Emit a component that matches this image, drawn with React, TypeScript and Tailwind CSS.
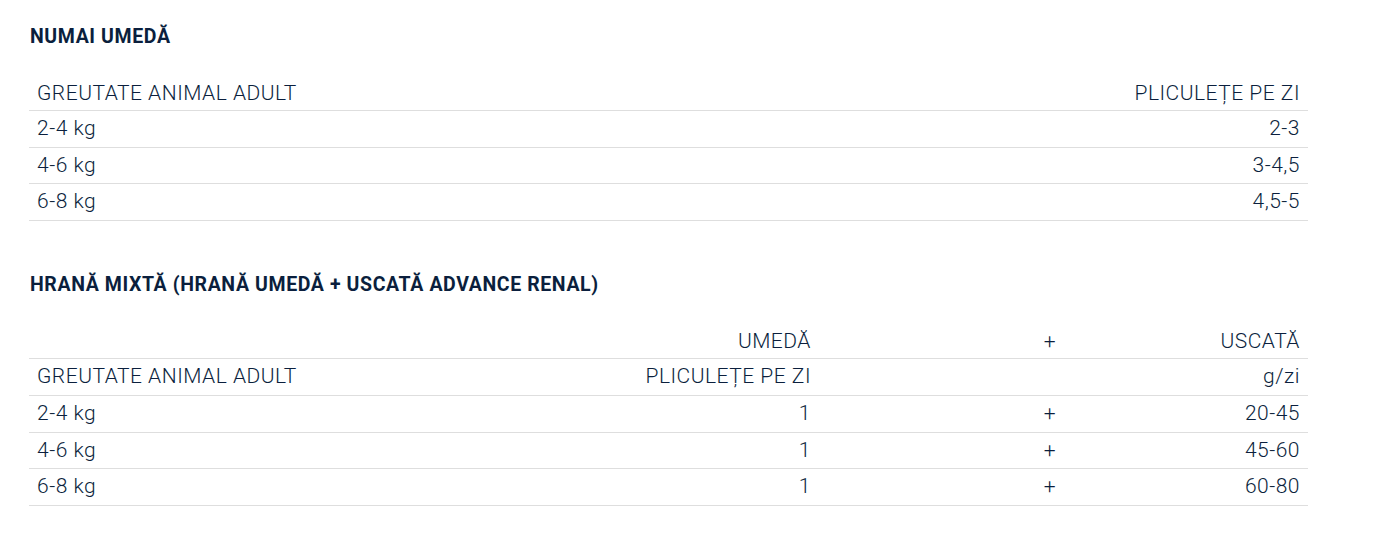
import React from "react";

const navy = "text-[#0b1f3d]";

const wetOnly = [
  ["2-4 kg", "2-3"],
  ["4-6 kg", "3-4,5"],
  ["6-8 kg", "4,5-5"],
];

const mixed = [
  ["2-4 kg", "1", "20-45"],
  ["4-6 kg", "1", "45-60"],
  ["6-8 kg", "1", "60-80"],
];

// header rows sit a little lower than data rows
const head = "px-2 pt-[3px] pb-[5px] leading-[24px] font-light tracking-[0.5px] border-b border-[#dedede]";
const cell = "px-2 pt-[5px] pb-[6.67px] leading-[24px] font-light tracking-[0.5px] border-b border-[#dedede]";

const Title = ({ children }: { children: React.ReactNode }) => (
  <h2 className="text-[19.5px] leading-[24px] font-bold tracking-[0.6px] mb-[29.5px] pl-px">{children}</h2>
);

export default function App() {
  return (
    <div
      className={`w-[1392px] h-[537px] bg-white pl-[29px] pt-[24.5px] ${navy}`}
      style={{ fontFamily: "Roboto, 'Liberation Sans', sans-serif" }}
    >
      <div className="w-[1279px]">
        <Title>NUMAI UMEDĂ</Title>
        <table className="w-full table-fixed border-collapse text-[21px]">
          <tbody>
            <tr>
              <td className={`${head} text-left`}>GREUTATE ANIMAL ADULT</td>
              <td className={`${head} text-right`}>PLICULEȚE PE ZI</td>
            </tr>
            {wetOnly.map(([w, v]) => (
              <tr key={w}>
                <td className={`${cell} text-left`}>{w}</td>
                <td className={`${cell} text-right`}>{v}</td>
              </tr>
            ))}
          </tbody>
        </table>

        <div className="h-[52px]" />

        <Title>HRANĂ MIXTĂ (HRANĂ UMEDĂ + USCATĂ ADVANCE RENAL)</Title>
        <table className="w-full table-fixed border-collapse text-[21px]">
          <colgroup>
            <col className="w-[390px]" />
            <col className="w-[400px]" />
            <col className="w-[245px]" />
            <col className="w-[244px]" />
          </colgroup>
          <tbody>
            <tr>
              <td className={head}></td>
              <td className={`${head} text-right`}>UMEDĂ</td>
              <td className={`${head} text-right`}>+</td>
              <td className={`${head} text-right`}>USCATĂ</td>
            </tr>
            <tr>
              <td className={`${cell} text-left`}>GREUTATE ANIMAL ADULT</td>
              <td className={`${cell} text-right`}>PLICULEȚE PE ZI</td>
              <td className={cell}></td>
              <td className={`${cell} text-right`}>g/zi</td>
            </tr>
            {mixed.map(([w, u, d]) => (
              <tr key={w}>
                <td className={`${cell} text-left`}>{w}</td>
                <td className={`${cell} text-right`}>{u}</td>
                <td className={`${cell} text-right`}>+</td>
                <td className={`${cell} text-right`}>{d}</td>
              </tr>
            ))}
          </tbody>
        </table>
      </div>
    </div>
  );
}
